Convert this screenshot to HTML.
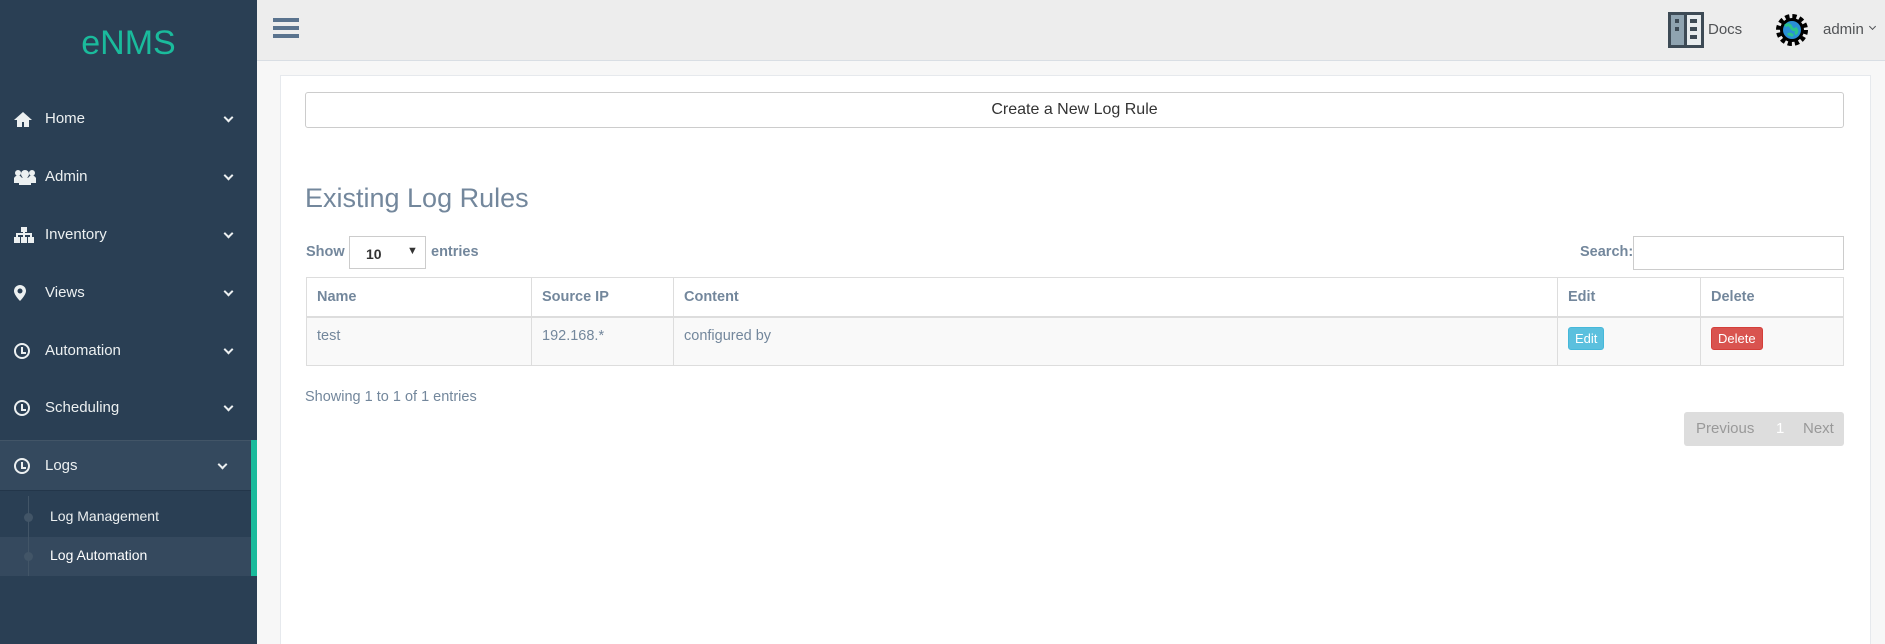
<!DOCTYPE html>
<html><head><meta charset="utf-8"><style>
*{box-sizing:border-box;margin:0;padding:0}
html,body{width:1885px;height:644px;overflow:hidden}
body{font-family:"Liberation Sans",sans-serif;background:#f7f7f7;position:relative;color:#73879C}
.side{position:absolute;left:0;top:0;width:257px;height:644px;background:#2A3F54;color:#ECF0F1}
.logo{position:absolute;left:0;width:257px;top:24px;text-align:center;font-size:34px;color:#1ABB9C}
.mi{position:absolute;left:0;width:257px;height:40px;font-size:15px;line-height:40px}
.mi .ic{position:absolute;left:14px;top:12px;width:18px;height:16px}
.mi .t{position:absolute;left:45px}
.mi .ch{position:absolute;left:225px;top:15px;width:7px;height:7px;border-right:2px solid #ECF0F1;border-bottom:2px solid #ECF0F1;transform:rotate(45deg)}
.clock{border:2.5px solid #ECF0F1;border-radius:50%;width:16px!important;height:16px!important}
.clock:after{content:"";position:absolute;left:5px;top:2px;width:3px;height:5px;border-left:2px solid #ECF0F1;border-bottom:2px solid #ECF0F1}
.top{position:absolute;left:257px;top:0;right:0;height:61px;background:#EDEDED;border-bottom:1px solid #D9DEE4}
.panel{position:absolute;left:280px;top:75px;width:1591px;height:569px;background:#fff;border:1px solid #E6E9ED;border-bottom:none}
.ab{position:absolute}
table{border-collapse:collapse;position:absolute;left:306px;top:277px;width:1538px;font-size:14.5px}
td,th{border:1px solid #ddd;text-align:left;padding:0 10px;vertical-align:top}
th{height:39px;vertical-align:middle;border-bottom:2px solid #ddd}
td{height:49px;background:#f9f9f9;padding-top:10px}
.btn{display:inline-block;color:#fff;border-radius:3px;font-size:13px;padding:3px 6px}
</style></head><body>
<div class="side">
<div class="logo">eNMS</div>
<div class="mi" style="top:99px"><svg class="ic" viewBox="0 0 18 16"><path d="M9 1L0 9h3v7h5v-5h2v5h5V9h3z" fill="#ECF0F1"/></svg><span class="t">Home</span><span class="ch"></span></div>
<div class="mi" style="top:157px"><svg class="ic" viewBox="0 0 22 16" style="width:22px"><circle cx="4" cy="4" r="3" fill="#ECF0F1"/><circle cx="18" cy="4" r="3" fill="#ECF0F1"/><circle cx="11" cy="5" r="4" fill="#ECF0F1"/><path d="M0 13a4 4 0 0 1 8-4v5H0zM14 9a4 4 0 0 1 8 4v1h-8zM5 16v-3a6 5 0 0 1 12 0v3z" fill="#ECF0F1"/></svg><span class="t">Admin</span><span class="ch"></span></div>
<div class="mi" style="top:215px"><svg class="ic" viewBox="0 0 20 16" style="width:20px"><rect x="7" y="0" width="6" height="5" fill="#ECF0F1"/><rect x="0" y="10" width="6" height="6" fill="#ECF0F1"/><rect x="7" y="10" width="6" height="6" fill="#ECF0F1"/><rect x="14" y="10" width="6" height="6" fill="#ECF0F1"/><path d="M10 5v5M3 10V7h14v3" stroke="#ECF0F1" stroke-width="2" fill="none"/></svg><span class="t">Inventory</span><span class="ch"></span></div>
<div class="mi" style="top:273px"><svg class="ic" viewBox="0 0 18 16"><path d="M6 0a6 6 0 0 1 6 6c0 4-6 10-6 10S0 10 0 6a6 6 0 0 1 6-6z" fill="#ECF0F1"/><circle cx="6" cy="6" r="2.5" fill="#2A3F54"/></svg><span class="t">Views</span><span class="ch"></span></div>
<div class="mi" style="top:331px"><span class="ic clock"></span><span class="t">Automation</span><span class="ch"></span></div>
<div class="mi" style="top:388px"><span class="ic clock"></span><span class="t">Scheduling</span><span class="ch"></span></div>
<div class="ab" style="left:0;top:440px;width:257px;height:51px;background:#34495E;border-top:1px solid #425567;border-bottom:1px solid #23364a"></div>
<div class="ab" style="left:0;top:537px;width:251px;height:39px;background:#35495E"></div>
<div class="ab" style="left:251px;top:440px;width:6px;height:136px;background:#1ABB9C"></div>
<div class="ab" style="left:28px;top:496px;width:1px;height:80px;background:#425567"></div>
<div class="ab" style="left:24px;top:513px;width:9px;height:9px;border-radius:50%;background:#425567"></div>
<div class="ab" style="left:24px;top:552px;width:9px;height:9px;border-radius:50%;background:#425567"></div>
<div class="mi" style="top:446px"><span class="ic clock"></span><span class="t">Logs</span><span class="ch" style="left:219px"></span></div>
<div class="ab" style="left:50px;top:508px;font-size:14px;color:#ECF0F1">Log Management</div>
<div class="ab" style="left:50px;top:547px;font-size:14px;color:#fff">Log Automation</div>
</div>
<div class="top">
<div class="ab" style="left:16px;top:18px;width:26px;height:4px;background:#5A738E;box-shadow:0 8px 0 #5A738E,0 16px 0 #5A738E"></div>
<svg class="ab" style="left:1411px;top:12px" width="36" height="36" viewBox="0 0 36 36"><rect width="36" height="36" fill="#3d4a55"/><rect x="3" y="3" width="13" height="30" fill="#8fa3b0"/><rect x="19" y="3" width="14" height="30" fill="#e8ecee"/><rect x="7" y="7" width="4" height="4" fill="#3d4a55"/><rect x="7" y="15" width="4" height="4" fill="#3d4a55"/><rect x="22" y="7" width="7" height="4" fill="#3d4a55"/><rect x="22" y="15" width="7" height="4" fill="#3d4a55"/><rect x="22" y="23" width="7" height="4" fill="#3d4a55"/></svg>
<div class="ab" style="left:1451px;top:21px;font-size:15px;color:#515356">Docs</div>
<svg class="ab" style="left:1518px;top:13px" width="34" height="34" viewBox="0 0 34 34"><circle cx="17" cy="17" r="13" fill="none" stroke="#000" stroke-width="6" stroke-dasharray="4 2.8"/><circle cx="17" cy="17" r="12" fill="#000"/><circle cx="17" cy="17" r="9" fill="#2a8fd6"/><path d="M10 13q4-3 6 1t5 2q2 3-1 5M13 22q2-2 5 1" stroke="#2bc48a" stroke-width="3" fill="none"/></svg>
<div class="ab" style="left:1566px;top:21px;font-size:15px;color:#515356">admin</div>
<div class="ab" style="left:1613px;top:24px;width:5px;height:5px;border-right:1px solid #515356;border-bottom:1px solid #515356;transform:rotate(45deg)"></div>
</div>
<div class="panel"></div>
<div class="ab" style="left:305px;top:92px;width:1539px;height:36px;border:1px solid #ccc;border-radius:3px;background:#fff;text-align:center;line-height:34px;font-size:16px;color:#333">Create a New Log Rule</div>
<div class="ab" style="left:305px;top:183px;font-size:27px;color:#73879C">Existing Log Rules</div>
<div class="ab" style="left:306px;top:244px;font-size:14.5px;font-weight:bold">Show</div>
<div class="ab" style="left:349px;top:236px;width:77px;height:33px;border:1px solid #ccc;font-size:14px;font-weight:bold;color:#333;padding:9px 0 0 16px">10<span style="position:absolute;left:57px;top:8px;font-size:11px">▼</span></div>
<div class="ab" style="left:431px;top:244px;font-size:14.5px;font-weight:bold">entries</div>
<div class="ab" style="left:1580px;top:244px;font-size:14.5px;font-weight:bold">Search:</div>
<div class="ab" style="left:1633px;top:236px;width:211px;height:34px;border:1px solid #ccc"></div>
<table><tr><th style="width:225px">Name</th><th style="width:142px">Source IP</th><th style="width:884px">Content</th><th style="width:143px">Edit</th><th>Delete</th></tr>
<tr><td>test</td><td>192.168.*</td><td>configured by</td><td style="padding-top:9px"><span class="btn" style="background:#5bc0de;border:1px solid #46b8da">Edit</span></td><td style="padding-top:9px"><span class="btn" style="background:#d9534f;border:1px solid #d43f3a">Delete</span></td></tr></table>
<div class="ab" style="left:305px;top:389px;font-size:14.5px">Showing 1 to 1 of 1 entries</div>
<div class="ab" style="left:1684px;top:412px;width:160px;height:34px;background:#ddd;border-radius:3px;font-size:15px;color:#999;line-height:34px"><span class="ab" style="left:12px">Previous</span><span class="ab" style="left:92px;color:#fff">1</span><span class="ab" style="left:119px">Next</span></div>
</body></html>
